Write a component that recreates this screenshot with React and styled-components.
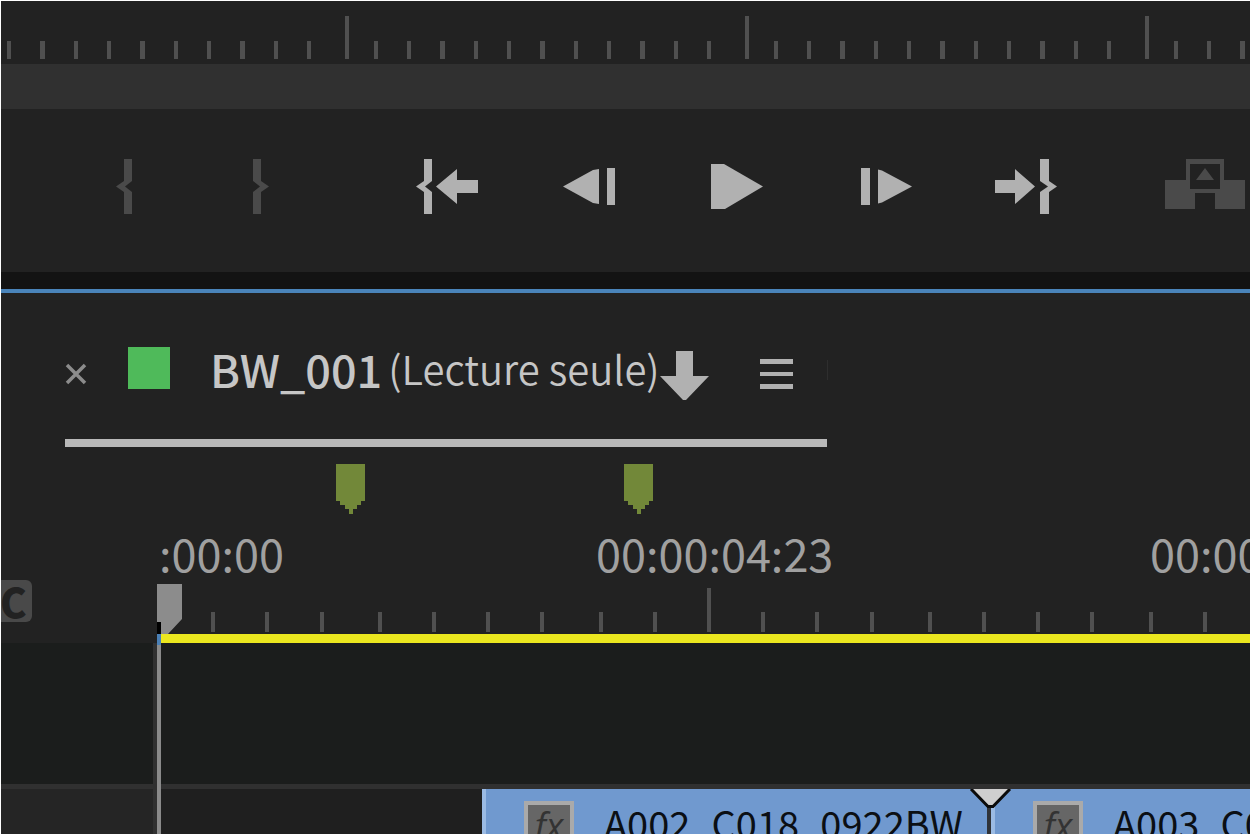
import { useState } from "react";
import styled, { createGlobalStyle } from "styled-components";

const GlobalStyle = createGlobalStyle`
  * {
    box-sizing: border-box;
  }

  body {
    margin: 0;
    background: #222222;
    color: #c6c6c6;
    font-family: "Noto Sans CJK SC", "Noto Sans", sans-serif;
  }
`;

const Workspace = styled.main`
  display: flex;
  flex-direction: column;
  height: 100vh;
  overflow: hidden;
  border-top: 1px solid #ffffff;
  border-left: 1px solid #ffffff;
`;

const RulerSvg = styled.svg`
  display: block;
  flex: none;
  width: 100%;
  height: ${(props) => props.$height}px;
  fill: ${(props) => props.$color};
`;

const ScrollBand = styled.div`
  flex: none;
  height: 45px;
  background: #303030;
`;

const Transport = styled.div`
  display: flex;
  flex: none;
  align-items: center;
  height: 163px;
  padding: 0 0 10px 114px;
`;

const ButtonGroup = styled.div`
  display: flex;
  gap: ${(props) => props.$gap}px;
  margin-right: ${(props) => props.$after}px;
`;

const IconButton = styled.button`
  display: flex;
  flex: none;
  padding: 0;
  border: none;
  background: none;
  color: ${(props) => (props.$dim ? "#4a4a4a" : "#b1b1b1")};
  cursor: pointer;

  svg {
    display: block;
    fill: currentColor;
  }
`;

const PanelGap = styled.div`
  flex: none;
  height: 17px;
  background: #131313;
`;

const Timeline = styled.section`
  position: relative;
  display: flex;
  flex: 1;
  flex-direction: column;
  min-height: 0;
  border-top: 4px solid #4a84ba;
`;

const TabBar = styled.header`
  display: flex;
  flex: none;
  align-items: center;
  padding-left: 64px;
`;

const Tab = styled.div`
  display: flex;
  align-items: center;
  width: 762px;
  height: 154px;
  padding: 16px 37px 0 0;
  border-bottom: 8px solid #b9b9b9;
`;

const TabEdge = styled.div`
  width: 1px;
  height: 20px;
  background: #2e2e2e;
`;

const Swatch = styled.span`
  flex: none;
  width: 42px;
  height: 42px;
  margin: 0 40px 12px 41px;
  background: #4fba5a;
`;

const SequenceName = styled.h1`
  display: flex;
  gap: 6px;
  margin: 0;
  padding-bottom: 10px;
  font-size: 45px;
  font-weight: 500;
  line-height: 56px;
  white-space: nowrap;
`;

const ReadOnly = styled.span`
  font-size: 40px;
  font-weight: 350;
  line-height: 54px;
`;

const TabActions = styled.div`
  display: flex;
  align-items: center;
  gap: 51px;
  margin-left: auto;
`;

const MarkerRow = styled.div`
  display: flex;
  flex: none;
  gap: 259px;
  padding: 17px 0 0 335px;

  svg {
    flex: none;
    fill: #728839;
  }
`;

const Timecodes = styled.div`
  display: grid;
  flex: none;
  grid-template-columns: 437px 554px max-content;
  height: 74px;
  padding: 13px 0 0 158px;
  overflow: hidden;
  color: #a0a0a0;
  font-size: 45px;
  line-height: 52px;
`;

const TimeRuler = styled.div`
  position: relative;
  flex: none;
  height: 46px;
`;

const CaptionButton = styled.button`
  position: absolute;
  top: -8px;
  left: 0;
  width: 31px;
  height: 42px;
  padding: 0;
  border: none;
  border-radius: 0 6px 6px 0;
  background: #494949;
  color: #222222;
  font: 900 40px/40px "Noto Sans CJK SC", sans-serif;
  text-align: left;
  text-indent: -1px;
  overflow: hidden;
`;

const Playhead = styled.svg`
  position: absolute;
  top: 291px;
  left: 156px;
  display: block;
`;

const PlayheadLine = styled.div`
  position: absolute;
  top: 352px;
  bottom: 0;
  left: 156px;
  width: 4px;
  background: #8a8a8a;
`;

const WorkArea = styled.div`
  flex: none;
  height: 9px;
  margin-left: 160px;
  background: #ebe71f;
`;

const Track = styled.div`
  display: grid;
  flex: none;
  grid-template-columns: 156px 1fr;
  height: ${(props) => props.$height}px;
`;

const TrackHeader = styled.div`
  border-right: 4px solid #303030;
  border-bottom: ${(props) => props.$line}px solid #303030;
  background: ${(props) => props.$background};
`;

const TrackLane = styled.div`
  display: flex;
  min-width: 0;
  padding-left: 325px;
  border-bottom: ${(props) => props.$line}px solid #303030;
  background: ${(props) => props.$background};
  overflow: hidden;
`;

const Clip = styled.article`
  display: flex;
  flex: none;
  gap: 30px;
  width: 509px;
  padding: 12px 0 0 38px;
  border-right: 4px solid #303338;
  border-left: 4px solid #9bbbe4;
  background: #7099cf;
`;

const FxBadge = styled.button`
  flex: none;
  width: 50px;
  height: 50px;
  padding: 0;
  border: 4px solid #aaaaaa;
  background: #666666;
  color: #333333;
  font: italic 36px/40px "Open Sans", sans-serif;
`;

const ClipName = styled.span`
  color: #0b0f14;
  font-size: 38px;
  line-height: 44px;
  white-space: nowrap;
`;

const Transition = styled.svg`
  position: absolute;
  top: 496px;
  left: 968px;
  display: block;
`;

const MONITOR_MAJOR = [344, 744, 1144];
const MONITOR_MINOR = Array.from({ length: 38 }, (_, i) => ({
    x: Math.floor(6 + (i * 100) / 3 + 0.5),
    width: i % 3 === 1 ? 5 : 4,
})).filter((tick) => !MONITOR_MAJOR.some((x) => Math.abs(x - tick.x) < 8));

const TIME_MAJOR = 706;
const TIME_MINOR = [
    210, 264, 319, 377, 431, 485, 539, 598, 652, 760, 814, 869, 927, 981, 1035, 1089, 1148, 1202,
];

const TIMECODES = [":00:00", "00:00:04:23", "00:00:09:23"];

const CLIPS = ["A002_C018_0922BW", "A003_C010_0922BW"];

const TRANSPORT_GROUPS = [
    {
        name: "marks",
        gap: 119,
        after: 145,
        dim: true,
        buttons: [
            { label: "Marquer l'entrée", width: 18, path: "M9 1h8v22l-7 5.5 7 5.5v22H9V34L1 28.5 9 23z" },
            { label: "Marquer la sortie", width: 18, path: "M1 1h8v22l8 5.5-8 5.5v22H1V34l7-5.5L1 23z" },
        ],
    },
    {
        name: "playback",
        gap: 82,
        after: 106,
        dim: false,
        buttons: [
            {
                label: "Aller à l'entrée",
                width: 64,
                path: "M9 1h8v22l-7 5.5 7 5.5v22H9V34L1 28.5 9 23zM21 28.5 42 11v11h21v13H42v11z",
            },
            { label: "Image précédente", width: 54, path: "M2 28.5 32 12l6-1v35l-6-1zM46 10h8v37h-8z" },
            { label: "Lecture", width: 80, path: "M14 6h13l39 22.5L28 51H14z" },
            { label: "Image suivante", width: 54, path: "M2 10h9v37H2zM19 11.5l4 1 30 16-30 16-4 1z" },
            {
                label: "Aller à la sortie",
                width: 64,
                path: "M0 22h20V11l20 17.5L20 46V35H0zM45 1h9v22l8 5.5-8 5.5v22h-9V34l8-5.5-8-5.5z",
            },
        ],
    },
    {
        name: "edit",
        gap: 0,
        after: 0,
        dim: true,
        buttons: [
            {
                label: "Prélever",
                width: 80,
                path: "M0 22h21V1h38v21h21v29H50V35H30v16H0zM25 6v25h30V6zM40 10l9 12H31z",
            },
        ],
    },
];

function Marker() {
    return (
        <svg width="29" height="50" viewBox="0 0 29 50" shapeRendering="crispEdges">
            <path d="M0 0h29v37h-4v4h-4v4h-4v5h-4v-5H9v-4H4v-4H0z" />
        </svg>
    );
}

function MonitorRuler() {
    return (
        <RulerSvg $height={63} $color="#505050" aria-hidden="true">
            {MONITOR_MAJOR.map((x) => (
                <rect key={x} x={x} y="15" width="4" height="43" />
            ))}
            {MONITOR_MINOR.map((tick) => (
                <rect key={tick.x} x={tick.x} y="40" width={tick.width} height="18" />
            ))}
        </RulerSvg>
    );
}

function TransportControls() {
    const [playing, setPlaying] = useState(false);

    return (
        <Transport>
            {TRANSPORT_GROUPS.map((group) => (
                <ButtonGroup key={group.name} $gap={group.gap} $after={group.after}>
                    {group.buttons.map((button) => (
                        <IconButton
                            key={button.label}
                            type="button"
                            $dim={group.dim}
                            aria-label={button.label}
                            aria-pressed={button.label === "Lecture" ? playing : undefined}
                            onClick={() => button.label === "Lecture" && setPlaying(!playing)}
                        >
                            <svg width={button.width} height="56" viewBox={`0 0 ${button.width} 56`}>
                                <path d={button.path} fillRule="evenodd" />
                            </svg>
                        </IconButton>
                    ))}
                </ButtonGroup>
            ))}
        </Transport>
    );
}

function SequenceTab() {
    return (
        <TabBar>
            <Tab>
                <IconButton type="button" aria-label="Fermer">
                    <svg width="22" height="22" viewBox="0 0 22 22">
                        <path d="M2 2l18 18M20 2 2 20" stroke="#8c8c8c" strokeWidth="3.5" />
                    </svg>
                </IconButton>
                <Swatch />
                <SequenceName>
                    BW_001 <ReadOnly>(Lecture seule)</ReadOnly>
                </SequenceName>
                <TabActions>
                    <IconButton type="button" aria-label="Télécharger">
                        <svg width="49" height="54" viewBox="0 -4 49 54">
                            <path d="M16 0h17v25h16L26 49h-3L0 25h16z" />
                        </svg>
                    </IconButton>
                    <IconButton type="button" aria-label="Menu">
                        <svg width="33" height="30" viewBox="0 0 33 30">
                            <path d="M0 0h33v5H0zM0 13h33v4H0zM0 25h33v5H0z" />
                        </svg>
                    </IconButton>
                </TabActions>
            </Tab>
            <TabEdge />
        </TabBar>
    );
}

function App() {
    return (
        <>
            <GlobalStyle />
            <Workspace>
                <MonitorRuler />
                <ScrollBand />
                <TransportControls />
                <PanelGap />
                <Timeline>
                    <SequenceTab />
                    <MarkerRow>
                        <Marker />
                        <Marker />
                    </MarkerRow>
                    <Timecodes>
                        {TIMECODES.map((time) => (
                            <span key={time}>{time}</span>
                        ))}
                    </Timecodes>
                    <TimeRuler>
                        <RulerSvg $height={46} $color="#505050" aria-hidden="true">
                            <rect x={TIME_MAJOR} y="0" width="4" height="44" />
                            {TIME_MINOR.map((x) => (
                                <rect key={x} x={x} y="24" width="4" height="20" />
                            ))}
                        </RulerSvg>
                        <CaptionButton type="button">C</CaptionButton>
                    </TimeRuler>
                    <WorkArea />
                    <Track $height={146}>
                        <TrackHeader $background="#1b1d1c" $line={5} />
                        <TrackLane $background="#1b1d1c" $line={5} />
                    </Track>
                    <Track $height={96}>
                        <TrackHeader $background="#252525" $line={0} />
                        <TrackLane $background="#1f1f1f" $line={0}>
                            {CLIPS.map((clip) => (
                                <Clip key={clip}>
                                    <FxBadge type="button">fx</FxBadge>
                                    <ClipName>{clip}</ClipName>
                                </Clip>
                            ))}
                        </TrackLane>
                    </Track>
                    <PlayheadLine />
                    <Playhead width="25" height="61" viewBox="0 0 25 61">
                        <path d="M0 0h25v35L11 50H4V38H0z" fill="#8c8c8c" />
                        <path d="M0 38h4v12H0z" fill="#000000" />
                        <path d="M0 50h4v11H0z" fill="#4a7fb5" />
                    </Playhead>
                    <Transition width="43" height="22" viewBox="0 0 43 22">
                        <path d="M2 0 19 17.5h5L41 0" fill="#cfcfcf" stroke="#0b0b0b" strokeWidth="3" />
                    </Transition>
                </Timeline>
            </Workspace>
        </>
    );
}

export default App;
